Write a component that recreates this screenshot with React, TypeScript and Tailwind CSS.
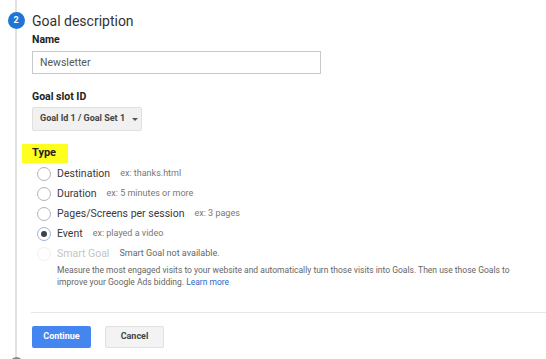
const RADIOS = [
  { label: 'Destination', hint: 'ex: thanks.html' },
  { label: 'Duration', hint: 'ex: 5 minutes or more' },
  { label: 'Pages/Screens per session', hint: 'ex: 3 pages' },
  { label: 'Event', hint: 'ex: played a video', checked: true },
]

function Radio({ checked, disabled }: { checked?: boolean; disabled?: boolean }) {
  if (disabled) return <span className="w-[14px] h-[14px] rounded-full border border-[#f0f0f0] shrink-0" />
  return (
    <span className={`w-[14px] h-[14px] rounded-full border-[1.5px] shrink-0 flex items-center justify-center ${checked ? 'border-[#9fb3d6]' : 'border-[#b4b4b4]'}`}>
      {checked && <span className="w-[6px] h-[6px] rounded-full bg-[#3a4350]" />}
    </span>
  )
}

export default function App() {
  return (
    <div className="w-[546px] h-[359px] bg-white overflow-hidden flex font-['Roboto',sans-serif] text-[#333]">
      {/* stepper rail */}
      <div className="w-[32px] shrink-0 flex flex-col items-center">
        <div className="w-[2px] h-[12px] bg-[#e2e2e2] shrink-0" />
        <div className="w-[17px] h-[17px] rounded-full bg-[#1f74d8] text-white text-[9px] font-bold flex items-center justify-center shrink-0">2</div>
        <div className="w-[2px] h-[328px] bg-[#e2e2e2] shrink-0" />
        <div className="w-[13px] h-[13px] rounded-full border-2 border-[#8a8a8a] shrink-0" />
      </div>

      <div className="flex-1 flex flex-col pt-[11px]">
        <h2 className="text-[14px] leading-[20px] text-[#333]">Goal description</h2>
        <div className="mt-[1px] text-[10.5px] leading-[16px] font-bold text-[#222]">Name</div>
        <div className="mt-[3px] w-[289px] h-[23px] border border-[#c9c9c9] flex items-center px-[7px] text-[10.5px] text-[#555]">Newsletter</div>

        <div className="mt-[15px] text-[10.5px] leading-[16px] font-bold text-[#222]">Goal slot ID</div>
        <div className="mt-[2px] w-[110px] h-[24px] bg-[#f1f1f1] border border-[#e0e0e0] rounded-[2px] flex items-center pl-[7px] gap-[7px] text-[9px] font-bold text-[#444]">
          <span>Goal Id 1 / Goal Set 1</span>
          <span className="w-0 h-0 border-l-[3px] border-r-[3px] border-t-[3px] border-l-transparent border-r-transparent border-t-[#555]" />
        </div>

        <div className="mt-[13px] -ml-[10px] w-[46px] h-[19px] bg-[#ffff1f] flex items-center pl-[10px] text-[11px] font-bold text-[#222]">Type</div>

        <div className="flex flex-col pt-[1px]">
          {RADIOS.map((r) => (
            <div key={r.label} className="h-[20px] flex items-center pl-[5px]">
              <Radio checked={r.checked} />
              <span className="ml-[6px] text-[10.5px] text-[#3a3a3a]">{r.label}</span>
              <span className="ml-[10px] text-[9px] text-[#777]">{r.hint}</span>
            </div>
          ))}
          <div className="h-[20px] flex items-center pl-[5px]">
            <Radio disabled />
            <span className="ml-[6px] text-[10.5px] text-[#c4c4c4]">Smart Goal</span>
            <span className="ml-[10px] text-[9px] text-[#666]">Smart Goal not available.</span>
          </div>
        </div>

        <p className="pl-[25px] pr-[4px] text-[8.5px] leading-[12px] text-[#666]">
          Measure the most engaged visits to your website and automatically turn those visits into Goals. Then use those Goals to improve your Google Ads bidding. <a className="text-[#2a6bc8]">Learn more</a>
        </p>

        <div className="mt-[24px] -ml-[1px] h-px bg-[#e6e6e6]" />

        <div className="mt-[13px] flex gap-[14px]">
          <button className="w-[59px] h-[22px] bg-[#4486f0] rounded-[2px] text-white text-[9px] font-bold">Continue</button>
          <button className="w-[59px] h-[22px] bg-[#f3f3f3] border border-[#e0e0e0] rounded-[2px] text-[#444] text-[9px] font-bold">Cancel</button>
        </div>
      </div>
    </div>
  )
}
